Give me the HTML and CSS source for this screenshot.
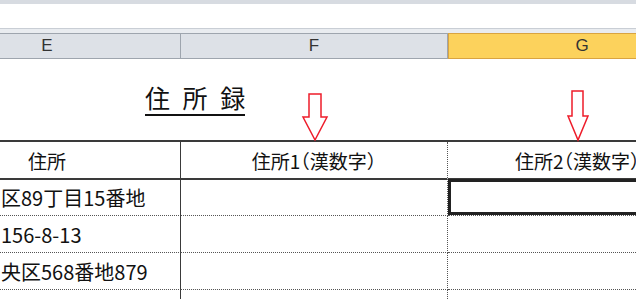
FILE: index.html
```html
<!DOCTYPE html>
<html lang="ja">
<head>
  <meta charset="UTF-8">
  <title>住所録</title>
  <link rel="stylesheet" href="styles.css">
</head>
<body>
  <div class="topbar"></div>
  <div class="formula"></div>
  <div class="col-heads">
    <div class="col-head col-e">E</div>
    <div class="col-head col-f">F</div>
    <div class="col-head col-g active">G</div>
  </div>
  <div class="sheet">
    <div class="title"><span>住 所 録</span></div>
    <div class="grid">
      <div class="cell head col-e">住所</div>
      <div class="cell head col-f">住所1<span class="paren">（</span>漢数字<span class="paren">）</span></div>
      <div class="cell head col-g">住所2<span class="paren">（</span>漢数字<span class="paren">）</span></div>

      <div class="cell body col-e">区89丁目15番地</div>
      <div class="cell body col-f"></div>
      <div class="cell body col-g selected"></div>

      <div class="cell body col-e">156-8-13</div>
      <div class="cell body col-f"></div>
      <div class="cell body col-g"></div>

      <div class="cell body col-e">央区568番地879</div>
      <div class="cell body col-f"></div>
      <div class="cell body col-g"></div>

      <div class="cell body col-e"></div>
      <div class="cell body col-f"></div>
      <div class="cell body col-g"></div>
    </div>
    <!-- arrows pointing at the new columns -->
    <svg class="arrow arrow-1" width="30" height="50" viewBox="0 0 30 50">
      <polygon points="7,1 19,1 19,24 25,24 13,47 1,24 7,24" />
    </svg>
    <svg class="arrow arrow-2" width="30" height="54" viewBox="0 0 30 54">
      <polygon points="5,1 16,1 16,26 21,26 11,50 1,26 5,26" />
    </svg>
  </div>
</body>
</html>
```

FILE: styles.css
```css
:root {
  --head-bg: #dde1e7;
  --head-line: #9ea5ae;
  --grid-line: #3a3a3a;
  --dot-line: #555;
  --arrow: #ee1c2a;
  --active: #fcd25c;
}
body {
  margin: 0;
  width: 636px;
  height: 300px;
  overflow: hidden;
  background: #fff;
  font-family: "Noto Sans CJK JP", sans-serif;
  color: #111;
}
.topbar {
  height: 4px;
  background: #d7dbe1;
}
.formula {
  height: 24px;
  border-bottom: 1px solid #c9ced5;
}
.col-heads {
  display: grid;
  grid-template-columns: 181px 267px 188px;
  height: 26px;
  background: #e9ecf0;
  padding-top: 4px;
  overflow: hidden;
}
.col-head {
  display: flex;
  align-items: center;
  justify-content: center;
  background: var(--head-bg);
  border-top: 1px solid var(--head-line);
  border-bottom: 1px solid var(--head-line);
  border-right: 1px solid var(--head-line);
  font-family: "Liberation Sans", sans-serif;
  font-size: 17px;
  color: #333;
}
.col-head.col-e {
  padding-right: 86px;
}
.col-head.active {
  background: var(--active);
  border-color: #d9a441;
  border-left: 1px solid #d9a441;
  border-right: none;
  padding-left: 79px;
}
.sheet {
  position: relative;
  height: 240px;
  overflow: hidden;
}
.title {
  height: 81px;
  padding-left: 145px;
  box-sizing: border-box;
}
.title span {
  display: inline-block;
  margin-top: 22px;
  font-size: 25px;
  line-height: 32px;
  word-spacing: 7px;
  border-bottom: 2px solid #111;
  height: 33px;
}
.grid {
  display: grid;
  grid-template-columns: 181px 267px 188px;
  grid-auto-rows: 37px;
  border-top: 2px solid var(--grid-line);
}
.cell {
  display: flex;
  align-items: center;
  font-size: 20px;
  white-space: nowrap;
  overflow: hidden;
  box-sizing: border-box;
  border-bottom: 1px dotted var(--dot-line);
}
.cell.col-e {
  border-right: 1px solid var(--grid-line);
}
.cell.col-f {
  border-right: 1px dotted var(--dot-line);
}
.cell.head {
  justify-content: center;
  font-size: 19px;
  border-bottom: 2px solid var(--grid-line);
  height: 38px;
}
.cell.head.col-e {
  padding-right: 86px;
}
.cell.head.col-g {
  justify-content: flex-start;
  padding-left: 67px;
}
.paren {
  font-feature-settings: "halt";
}
.cell.body.col-e {
  padding-left: 1px;
}
.cell.selected {
  box-shadow: inset 3px 3px 0 #222, inset 0 -3px 0 #222;
}
.arrow {
  position: absolute;
  overflow: visible;
}
.arrow polygon {
  fill: #fff;
  stroke: var(--arrow);
  stroke-width: 1.5;
}
.arrow-1 {
  left: 302px;
  top: 34px;
}
.arrow-2 {
  left: 567px;
  top: 31px;
}
```
